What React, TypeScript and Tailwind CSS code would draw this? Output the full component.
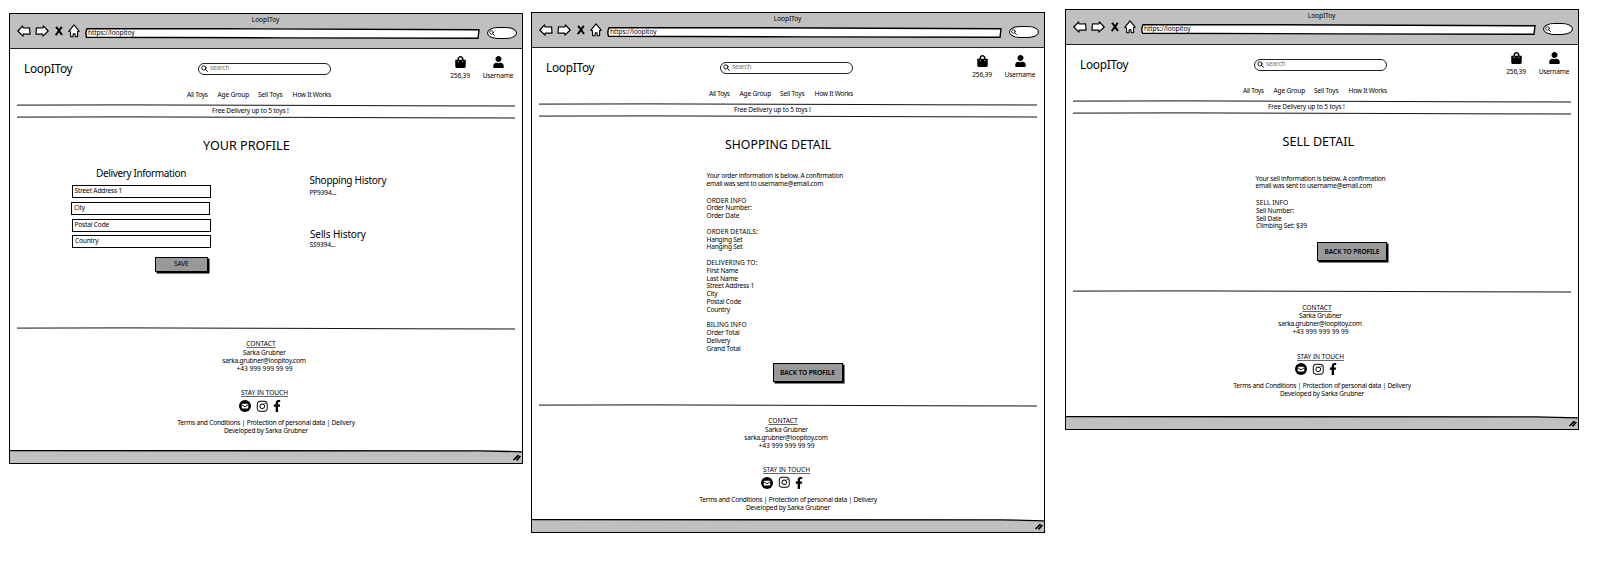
import type { ReactNode } from "react";
import { FaFacebookF, FaInstagram, FaUser, FaShoppingBag } from "react-icons/fa";

function Rule() {
  return (
    <svg className="block ml-[7px] h-[3px] w-[499px]" viewBox="0 0 499 3" fill="none">
      <path d="M0 1.1 L110 0.9 L290 1.4 L400 1.8 L498 2" stroke="#111" strokeWidth="1" />
    </svg>
  );
}

function Arrow({ flip = false }: { flip?: boolean }) {
  return (
    <svg viewBox="0 0 14 12" className={flip ? "h-3 w-[14px] -scale-x-100" : "h-3 w-[14px]"}>
      <path
        d="M0.8 6 L5.6 0.9 L6 3 L12.6 2.8 L13 9.2 L6.2 9.2 L6 11.2 Z"
        fill="white"
        stroke="black"
        strokeWidth="1.2"
        strokeLinejoin="round"
      />
    </svg>
  );
}

function Lens({ size }: { size: string }) {
  return (
    <svg viewBox="0 0 7 7" className={size} fill="none" stroke="black" strokeLinecap="round">
      <circle cx="2.9" cy="2.9" r="2.1" strokeWidth="0.9" />
      <path d="M4.5 4.5 L6.4 6.4" strokeWidth="1" />
    </svg>
  );
}

function Chrome() {
  return (
    <div className="h-[35px] shrink-0 border-b-[1.5px] border-[#222] bg-[#c0c0c0]">
      <div className="h-[11px] pr-[1px] pt-[1px] text-center leading-[9px] tracking-[-0.1px]">LoopIToy</div>
      <div className="flex h-[14px] items-center pl-[7px]">
        <div className="-mt-[2px] flex items-center">
          <Arrow />
          <div className="ml-[4px] flex">
            <Arrow flip />
          </div>
          <svg viewBox="0 0 8 10" className="ml-[6px] h-[10px] w-[8px]" fill="none" stroke="black" strokeWidth="2">
            <path d="M1 0.8 C3 3 5 6 7 9 M6.8 0.8 C5 3 3 6 0.8 9.2" />
          </svg>
          <svg viewBox="0 0 12 14" className="ml-[5px] h-[14px] w-[12px]">
            <path
              d="M6 0.9 L11.2 7.2 L9.6 7.6 L9.6 12.6 L7.3 12.8 L7 9.8 L5.2 9.8 L5 12.8 L2.6 12.6 L2.5 7.8 L0.8 7.4 Z"
              fill="white"
              stroke="black"
              strokeWidth="1.1"
              strokeLinejoin="round"
            />
          </svg>
        </div>
        <div className="relative mt-[3px] ml-[5px] h-[11px] w-[395px]">
          <svg viewBox="0 0 395 11" className="absolute inset-0 h-[11px] w-[395px]">
            <path
              d="M2 0.8 L140 0.7 L394 1.8 L393 10.3 L200 9.9 L1.5 9.2 C0.5 6 0.8 3 2 0.8 Z"
              fill="white"
              stroke="black"
              strokeWidth="1.4"
            />
          </svg>
          <div className="relative pl-[3px] leading-[9px] tracking-[-0.08px]">https://loopitoy</div>
        </div>
        <div className="mt-[2px] ml-[7px] flex h-[12px] w-[30px] items-center rounded-[11px/6px] border-[1.4px] border-black bg-white pl-[1px]">
          <Lens size="size-[6px]" />
        </div>
      </div>
    </div>
  );
}

function SiteHeader() {
  return (
    <header className="h-[71px] shrink-0">
      <div className="flex h-[38px]">
        <div className="w-[188px] pl-[14px] text-[11.8px] leading-[39px] tracking-[-0.25px]">LoopIToy</div>
        <div className="mt-[13.5px] flex h-[12px] w-[133px] items-center rounded-full border border-[#222] bg-white pl-[2px] text-[#777]">
          <Lens size="size-[7px]" />
          <span className="ml-[2px] -mt-[1px] leading-[10px]">search</span>
        </div>
        <div className="ml-[111px] flex w-[36px] flex-col items-center pt-[7px]">
          <FaShoppingBag className="h-[12px] w-[11px]" />
          <span className="mt-[4px] leading-[8px]">256,39</span>
        </div>
        <div className="ml-[2px] flex w-[36px] flex-col items-center pt-[7px]">
          <FaUser className="h-[12px] w-[11px]" />
          <span className="mt-[4px] leading-[8px]">Username</span>
        </div>
      </div>
      <nav className="flex pt-[3.5px] leading-[8px] whitespace-nowrap">
        <span className="ml-[177px] w-[30.5px] tracking-[-0.28px]">All Toys</span>
        <span className="w-[40.5px]">Age Group</span>
        <span className="w-[34.5px]">Sell Toys</span>
        <span className="tracking-[-0.25px]">How It Works</span>
      </nav>
      <div className="mt-[5.5px]">
        <Rule />
        <div className="h-[8.5px] pl-[202px] leading-[8px]">Free Delivery up to 5 toys !</div>
        <Rule />
      </div>
    </header>
  );
}

function MailBadge() {
  return (
    <svg viewBox="0 0 24 24" className="size-[12px]">
      <circle cx="12" cy="12" r="12" fill="black" />
      <rect x="5.5" y="7.5" width="13" height="9.5" rx="1.5" fill="white" />
      <path d="M5.5 9.5 L12 13.5 L18.5 9.5" fill="none" stroke="black" strokeWidth="1.8" />
    </svg>
  );
}

function Footer({ height }: { height: string }) {
  return (
    <footer className={"shrink-0 text-center leading-[8px] " + height}>
      <Rule />
      <div className="mt-[10.5px] -ml-[10px] text-[6.6px] tracking-normal underline decoration-[#666] underline-offset-1">CONTACT</div>
      <div className="mt-[0.5px] -ml-[3px]">Sarka Grubner</div>
      <div className="-ml-[4px] tracking-[-0.25px]">sarka.grubner@loopitoy.com</div>
      <div className="-ml-[3px] tracking-normal">+43 999 999 99 99</div>
      <div className="mt-[16.5px] -ml-[3px] text-[6.5px] tracking-normal underline decoration-[#666] underline-offset-1">STAY IN TOUCH</div>
      <div className="mt-[2px] flex h-[13px] items-center pl-[229px]">
        <MailBadge />
        <FaInstagram className="ml-[4.5px] size-[12.5px]" />
        <FaFacebookF className="ml-[4px] h-[12px] w-[10px]" />
      </div>
      <div className="mt-[6.5px] tracking-[-0.22px]">Terms and Conditions | Protection of personal data | Delivery</div>
      <div>Developed by Sarka Grubner</div>
    </footer>
  );
}

function BottomBar() {
  return (
    <div className="relative h-[13px] bg-[#c0c0c0]">
      <svg viewBox="0 0 512 13" className="absolute inset-0 h-[13px] w-[512px]" fill="none" stroke="black">
        <path d="M0 0 H512 V1.8 L470 0.8 H0 Z" fill="white" stroke="none" />
        <path d="M0 0.7 L470 0.8 L512 1.8" strokeWidth="1.3" />
        <path d="M503.5 10 L508.5 5.2 M506.5 10.4 L510.3 6" strokeWidth="1.7" />
      </svg>
    </div>
  );
}

function Window({ className, footer, children }: { className: string; footer: string; children: ReactNode }) {
  return (
    <section
      className={
        "flex w-[514px] shrink-0 flex-col border-[1.4px] border-black bg-white text-[6.6px] tracking-[-0.18px] " + className
      }
    >
      <Chrome />
      <SiteHeader />
      <main className="min-h-0 flex-1">{children}</main>
      <Footer height={footer} />
      <BottomBar />
    </section>
  );
}

function Field({ label, className }: { label: string; className: string }) {
  return (
    <div className={"h-[13px] w-[139px] border-[1.3px] border-black pl-[2px] leading-[10.5px] " + className}>{label}</div>
  );
}

function Button({ label, className }: { label: string; className: string }) {
  return (
    <button
      className={
        "block border-[1.2px] border-black bg-[#999] text-center shadow-[1.5px_1.5px_0_#000] " + className
      }
    >
      {label}
    </button>
  );
}

function Lines({ items, className }: { items: string[]; className: string }) {
  return (
    <div className={"leading-[7.8px] " + className}>
      {items.map((s, i) => (
        <div key={i} className={s === s.toUpperCase() ? "h-[7.8px] tracking-[0.05px]" : "h-[7.8px]"}>
          {s}
        </div>
      ))}
    </div>
  );
}

export default function App() {
  return (
    <div className="flex h-[565px] w-[1603px] items-start overflow-hidden bg-white pl-[9px] font-['Noto_Sans',sans-serif] text-black">
      <Window className="mt-[13px] h-[450.5px]" footer="h-[122.6px]">
        <h1 className="pt-[18px] pl-[193px] text-[12.6px] leading-[16px] tracking-normal">YOUR PROFILE</h1>
        <div className="flex">
          <div className="w-[299.5px] pl-[61.5px]">
            <h2 className="mt-[12px] ml-[24.5px] text-[10px] leading-[14px] tracking-[-0.36px]">Delivery Information</h2>
            <Field label="Street Address 1" className="mt-[4.5px]" />
            <Field label="City" className="mt-[4.5px] -ml-[0.5px]" />
            <Field label="Postal Code" className="mt-[3.5px]" />
            <Field label="Country" className="mt-[3.5px] ml-[0.5px]" />
            <Button label="SAVE" className="mt-[9px] ml-[83px] h-[14.5px] w-[53.5px] leading-[12px]" />
          </div>
          <div>
            <h2 className="mt-[19px] text-[10px] leading-[14px] tracking-[-0.28px]">Shopping History</h2>
            <div className="mt-[1.5px] leading-[8px]">PP9394...</div>
            <h2 className="mt-[30px] ml-[0.5px] text-[10px] leading-[14px] tracking-[-0.12px]">Sells History</h2>
            <div className="leading-[7px]">SS9394...</div>
          </div>
        </div>
      </Window>

      <Window className="mt-[12px] ml-[8px] h-[520.5px]" footer="h-[115px]">
        <h1 className="pt-[18px] pl-[193px] text-[12.3px] leading-[16px] tracking-normal">SHOPPING DETAIL</h1>
        <Lines
          className="mt-[19px] pl-[174.5px] tracking-[-0.23px]"
          items={["Your order information is below. A confirmation", "email was sent to username@email.com"]}
        />
        <Lines
          className="mt-[9px] pl-[174.5px]"
          items={[
            "ORDER INFO", "Order Number:", "Order Date", "",
            "ORDER DETAILS:", "Hanging Set", "Hanging Set", "",
            "DELIVERING TO:", "First Name", "Last Name", "Street Address 1", "City", "Postal Code", "Country", "",
            "BILING INFO", "Order Total", "Delivery", "Grand Total",
          ]}
        />
        <Button label="BACK TO PROFILE" className="mt-[10px] ml-[240.5px] h-[19.5px] w-[70px] font-semibold leading-[17px] tracking-[-0.08px]" />
      </Window>

      <Window className="mt-[9px] ml-[20px] h-[420.5px]" footer="h-[125.5px]">
        <h1 className="pt-[18px] pl-[216.5px] text-[12.6px] leading-[16px] tracking-normal">SELL DETAIL</h1>
        <Lines
          className="mt-[24.5px] pl-[189.5px] tracking-[-0.23px]"
          items={["Your sell information is below. A confirmation", "email was sent to username@email.com"]}
        />
        <Lines
          className="mt-[9px] pl-[190px]"
          items={["SELL INFO", "Sell Number:", "Sell Date", "Climbing Set: $39"]}
        />
        <Button label="BACK TO PROFILE" className="mt-[11.5px] ml-[251px] h-[19.5px] w-[70px] font-semibold leading-[17px] tracking-[-0.08px]" />
      </Window>
    </div>
  );
}
